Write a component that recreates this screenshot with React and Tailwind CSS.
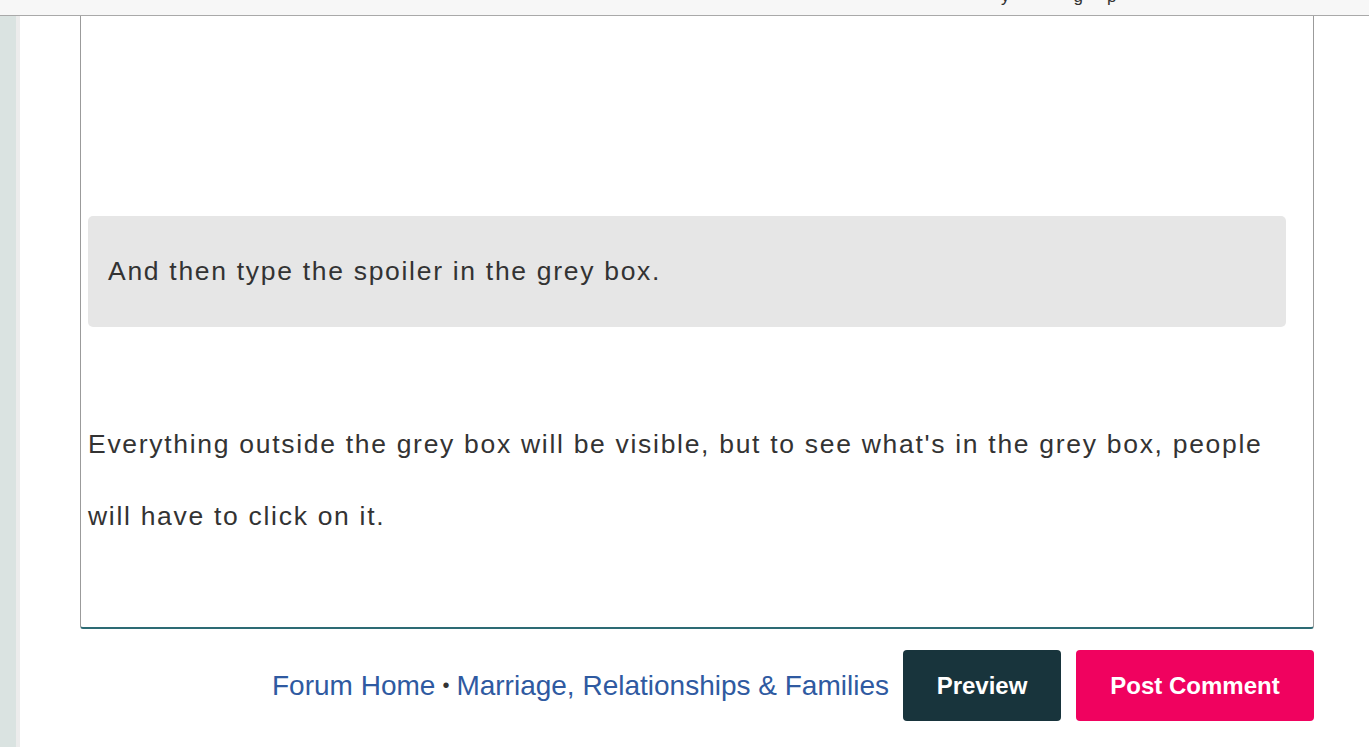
const TopBar = () => (
	<div className="h-4 bg-[#f7f7f7] border-b border-[#a9a9a9] overflow-hidden relative">
		<div className="absolute -top-[13px] left-[1001px] flex text-[17px] text-[#333] leading-[20px]">
			<span>y</span>
			<span className="ml-[64px]">g</span>
			<span className="ml-[24px]">p</span>
		</div>
	</div>
);

const App = () => {
	return (
		<div className="w-[1369px] h-[747px] overflow-hidden bg-white font-['Liberation_Sans',Arial,sans-serif] text-[#333]">
			<TopBar />
			<div className="flex h-[731px]">
				<div className="w-4 bg-[#dae3e1]" />
				<div className="w-1 bg-[#ececec]" />
				<div className="flex-1 pl-[60px] pr-[55px]">
					<div className="border-x border-b-2 border-x-[#9b9b9b] border-b-[#2d6b74] rounded-b-[3px] px-[7px] pt-[200px] pb-[75px] text-[26.5px] tracking-[1.7px]">
						<div className="mr-[20px] h-[111px] bg-[#e6e6e6] rounded-[5px] flex items-center px-5">
							And then type the spoiler in the grey box.
						</div>
						<p className="mt-[81px] leading-[72px] whitespace-nowrap">
							Everything outside the grey box will be visible, but to see what's in the grey box, people
							<br />
							will have to click on it.
						</p>
					</div>
					<div className="mt-[21px] flex items-center justify-end">
						<div className="text-[28px] text-[#2f5aa1] mr-[14px] whitespace-nowrap">
							<a href="#">Forum Home</a>
							<span className="text-[#333] mx-[7px] text-[20px] align-[3px]">•</span>
							<a href="#">Marriage, Relationships &amp; Families</a>
						</div>
						<button className="h-[71px] w-[158px] bg-[#18343c] rounded-[4px] text-white font-bold text-[24px]">
							Preview
						</button>
						<button className="ml-[15px] h-[71px] w-[238px] bg-[#f0025f] rounded-[4px] text-white font-bold text-[24px]">
							Post Comment
						</button>
					</div>
				</div>
			</div>
		</div>
	);
};

export default App;
